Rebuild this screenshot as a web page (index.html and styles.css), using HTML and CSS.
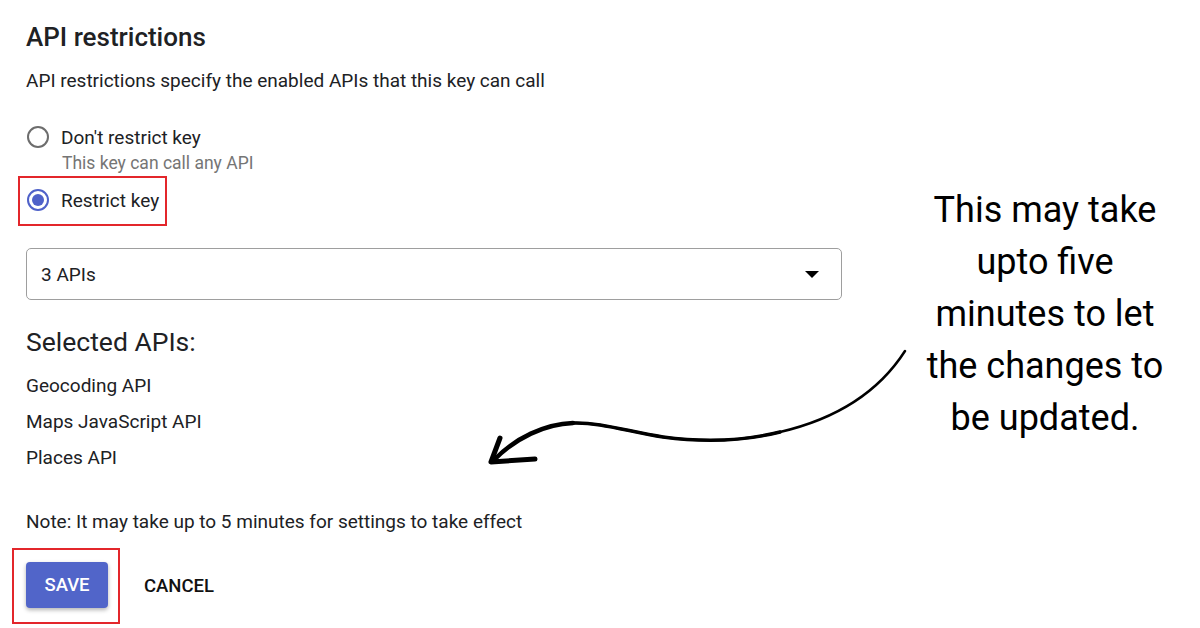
FILE: index.html
```html
<!DOCTYPE html>
<html lang="en">
<head>
    <meta charset="UTF-8">
    <title>API restrictions</title>
    <link rel="stylesheet" href="styles.css">
</head>
<body>
<div class="panel">
    <h2 class="title">API restrictions</h2>
    <p class="desc">API restrictions specify the enabled APIs that this key can call</p>

    <div class="radio-row">
        <span class="radio"></span>
        <span class="radio-label">Don't restrict key</span>
    </div>
    <div class="radio-hint">This key can call any API</div>

    <div class="mark mark-radio">
        <div class="radio-row">
            <span class="radio checked"></span>
            <span class="radio-label">Restrict key</span>
        </div>
    </div>

    <div class="select">
        <span>3 APIs</span>
        <span class="caret"></span>
    </div>

    <h3 class="subtitle">Selected APIs:</h3>
    <ul class="api-list">
        <li>Geocoding API</li>
        <li>Maps JavaScript API</li>
        <li>Places API</li>
    </ul>

    <p class="note">Note: It may take up to 5 minutes for settings to take effect</p>

    <div class="actions">
        <div class="mark mark-btn">
            <div class="btn btn-save">SAVE</div>
        </div>
        <div class="btn btn-cancel">CANCEL</div>
    </div>
</div>

<div class="callout">
    This may take<br>
    upto five<br>
    minutes to let<br>
    the changes to<br>
    be updated.
</div>

<svg class="arrow" width="440" height="150" viewBox="480 330 440 150">
    <path d="M905 351 C880 390 840 418 780 432 C740 442 700 442 663 437 C630 432 600 422 573 423 C545 424 515 438 494 460"
          fill="none" stroke="#000" stroke-width="2.5" stroke-linecap="round"/>
    <path d="M780 432 C740 442 700 442 663 437 C630 432 600 422 573 423"
          fill="none" stroke="#000" stroke-width="3.5" stroke-linecap="round"/>
    <path d="M573 423 C545 424 515 438 494 460"
          fill="none" stroke="#000" stroke-width="4.5" stroke-linecap="round"/>
    <path d="M500 438 L491 462 L535 459" fill="none" stroke="#000" stroke-width="5"
          stroke-linecap="round" stroke-linejoin="round"/>
</svg>
</body>
</html>
```

FILE: styles.css
```css
body{
    margin: 0;
    background: #ffffff;
    font-family: Roboto, "Liberation Sans", Arial, sans-serif;
    color: #202124;
}

.panel{
    width: 816px;
    padding: 23px 0 0 26px;
}

.title{
    margin: 0;
    font: 500 26px/28px Roboto, sans-serif;
}
.desc{
    margin: 20px 0 0;
    font: 19px/20px Roboto, sans-serif;
}

.radio-row{
    display: flex;
    align-items: center;
    height: 24px;
    margin-top: 34px;
}
.mark .radio-row{
    margin-top: 0;
}
.radio{
    box-sizing: border-box;
    width: 22px;
    height: 22px;
    margin-left: 1px;
    border: 2px solid #6d6d6d;
    border-radius: 50%;
    display: flex;
    align-items: center;
    justify-content: center;
}
.radio.checked{
    border-color: #4f61c9;
}
.radio.checked::after{
    content: "";
    width: 12px;
    height: 12px;
    border-radius: 50%;
    background: #4f61c9;
}
.radio-label{
    margin-left: 12px;
    font-size: 19px;
}
.radio-hint{
    margin: 5px 0 0 36px;
    font: 17.5px/18px Roboto, sans-serif;
    color: #757575;
}

/* red highlight boxes */
.mark{
    border: 2px solid #e3262b;
}
.mark-radio{
    display: inline-block;
    margin: 4px 0 0 -8px;
    padding: 10px 6px 12px 6px;
}
.mark-btn{
    margin-left: -14px;
    padding: 12px 10px 14px 12px;
}

.select{
    box-sizing: border-box;
    height: 52px;
    margin-top: 22px;
    padding: 0 22px 0 14px;
    border: 1px solid #9e9e9e;
    border-radius: 5px;
    display: flex;
    align-items: center;
    justify-content: space-between;
    font-size: 19px;
}
.caret{
    width: 0;
    height: 0;
    border-left: 7px solid transparent;
    border-right: 7px solid transparent;
    border-top: 7px solid #000;
}

.subtitle{
    margin: 28px 0 0;
    font: 400 26.5px/28px Roboto, sans-serif;
}
.api-list{
    list-style: none;
    margin: 20px 0 0;
    padding: 0;
    display: flex;
    flex-direction: column;
    gap: 16px;
    font: 19px/20px Roboto, sans-serif;
}

.note{
    margin: 44px 0 0;
    font: 19px/20px Roboto, sans-serif;
}

.actions{
    display: flex;
    align-items: center;
    gap: 24px;
    margin-top: 16px;
}
.btn{
    font: 500 18.5px/46px Roboto, sans-serif;
}
.btn-save{
    width: 82px;
    height: 46px;
    text-align: center;
    color: #ffffff;
    background: #5165c9;
    border-radius: 4px;
    box-shadow: 0 2px 4px rgba(0, 0, 0, 0.3);
}
.btn-cancel{
    color: #111111;
}

/* annotation on the right */
.callout{
    position: absolute;
    left: 900px;
    top: 184px;
    width: 290px;
    text-align: center;
    font: 36px/52px Roboto, sans-serif;
    color: #000000;
}
.arrow{
    position: absolute;
    left: 480px;
    top: 330px;
}
```
